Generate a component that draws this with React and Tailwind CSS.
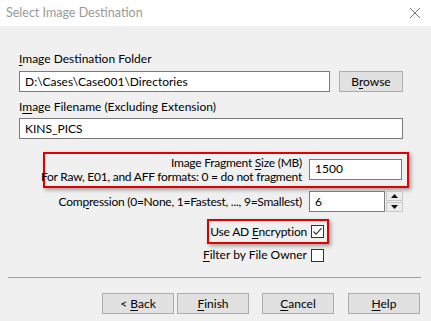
import React from 'react';

const U = ({ children }) => <span className="underline underline-offset-2">{children}</span>;

const Checkbox = ({ checked }) => (
    <div className="w-[13px] h-[13px] border border-[#333333] bg-white flex items-center justify-center shrink-0">
        {checked && (
            <svg width="11" height="11" viewBox="0 0 11 11">
                <path d="M1.5 5.5 L4.2 8.2 L9.5 2.2" fill="none" stroke="#333" strokeWidth="1.1" />
            </svg>
        )}
    </div>
);

const WinButton = ({ children, className = '' }) => (
    <button className={`h-[21px] border border-[#adadad] bg-[#e1e1e1] text-black text-[12px] leading-none flex items-center justify-center shrink-0 ${className}`}>
        <span>{children}</span>
    </button>
);

const App = () => {
    return (
        <div className="w-[431px] h-[321px] bg-[#f0f0f0] flex flex-col overflow-hidden text-[12px] text-black whitespace-nowrap" style={{ fontFamily: 'Lato, "Liberation Sans", sans-serif' }}>
            {/* Title bar */}
            <div className="h-[26px] bg-white flex items-center justify-between pl-[6px] pr-[8px] shrink-0">
                <span className="text-[12.5px] text-[#999999]">Select Image Destination</span>
                <svg width="12" height="12" viewBox="0 0 12 12" className="mr-[2px]">
                    <path d="M1 1 L11 11 M11 1 L1 11" stroke="#777" strokeWidth="1" />
                </svg>
            </div>

            {/* Body */}
            <div className="flex flex-col pl-[19px] pr-[28px] pt-[25px]">
                <div className="leading-[16px]"><U>I</U>mage Destination Folder</div>
                <div className="flex items-center mt-[4px]">
                    <div className="w-[311px] h-[21px] border border-[#7a7a7a] bg-white flex items-center pl-[5px] shrink-0">D:\Cases\Case001\Directories</div>
                    <WinButton className="w-[64px] ml-[9px]">B<U>r</U>owse</WinButton>
                </div>

                <div className="leading-[16px] mt-[7px]">I<U>m</U>age Filename (Excluding Extension)</div>
                <div className="h-[21px] border border-[#7a7a7a] bg-white flex items-center pl-[5px] mt-[3px]">KINS_PICS</div>

                {/* Fragment size */}
                <div className="ml-[24px] mr-[-6px] mt-[13px] border-2 border-[#e00000] shadow-[2px_2px_4px_rgba(0,0,0,0.35)] flex items-center justify-end pr-[5px] h-[36px]">
                    <div className="text-right leading-[14px] tracking-[-0.25px]">
                        <div>Image Fragment <U>S</U>ize (MB)</div>
                        <div>For Raw, E01, and AFF formats: 0 = do not fragment</div>
                    </div>
                    <div className="w-[93px] h-[21px] border border-[#7a7a7a] bg-white flex items-center pl-[5px] ml-[7px] mt-[-2px] shrink-0">1500</div>
                </div>

                {/* Compression */}
                <div className="flex items-center justify-end mt-[3px]">
                    <span className="tracking-[-0.25px]">Com<U>p</U>ression (0=None, 1=Fastest, ..., 9=Smallest)</span>
                    <div className="flex ml-[7px] shrink-0">
                        <div className="w-[76px] h-[21px] border border-[#7a7a7a] bg-white flex items-center pl-[5px]">6</div>
                        <div className="w-[17px] h-[21px] flex flex-col ml-[1px]">
                            <div className="h-[10px] border border-[#c8c8c8] bg-[#ececec] flex items-center justify-center">
                                <svg width="7" height="4" viewBox="0 0 7 4"><path d="M3.5 0 L7 4 L0 4 Z" fill="#111" /></svg>
                            </div>
                            <div className="h-[10px] mt-[1px] border border-[#c8c8c8] bg-[#ececec] flex items-center justify-center">
                                <svg width="7" height="4" viewBox="0 0 7 4"><path d="M0 0 L7 0 L3.5 4 Z" fill="#111" /></svg>
                            </div>
                        </div>
                    </div>
                </div>

                {/* Checkboxes */}
                <div className="self-end mr-[74px] mt-[7px] h-[25px] border-2 border-[#e00000] shadow-[2px_2px_4px_rgba(0,0,0,0.35)] flex items-center pl-[1px] pr-[3px]">
                    <span className="mr-[4px] tracking-[-0.2px]">Use AD <U>E</U>ncryption</span>
                    <Checkbox checked />
                </div>
                <div className="self-end mr-[79px] mt-[4px] h-[14px] flex items-center">
                    <span className="mr-[4px]"><U>F</U>ilter by File Owner</span>
                    <Checkbox />
                </div>

                {/* Separator */}
                <div className="ml-[-11px] mr-[-18px] mt-[15px] h-px bg-[#a0a0a0]" />

                {/* Buttons */}
                <div className="flex mr-[-17px] mt-[15px] justify-end">
                    <WinButton className="w-[72px]">&lt; <U>B</U>ack</WinButton>
                    <WinButton className="w-[72px] ml-[3px]"><U>F</U>inish</WinButton>
                    <WinButton className="w-[72px] ml-[13px]"><U>C</U>ancel</WinButton>
                    <WinButton className="w-[72px] ml-[14px]"><U>H</U>elp</WinButton>
                </div>
            </div>
        </div>
    );
};

export default App;
